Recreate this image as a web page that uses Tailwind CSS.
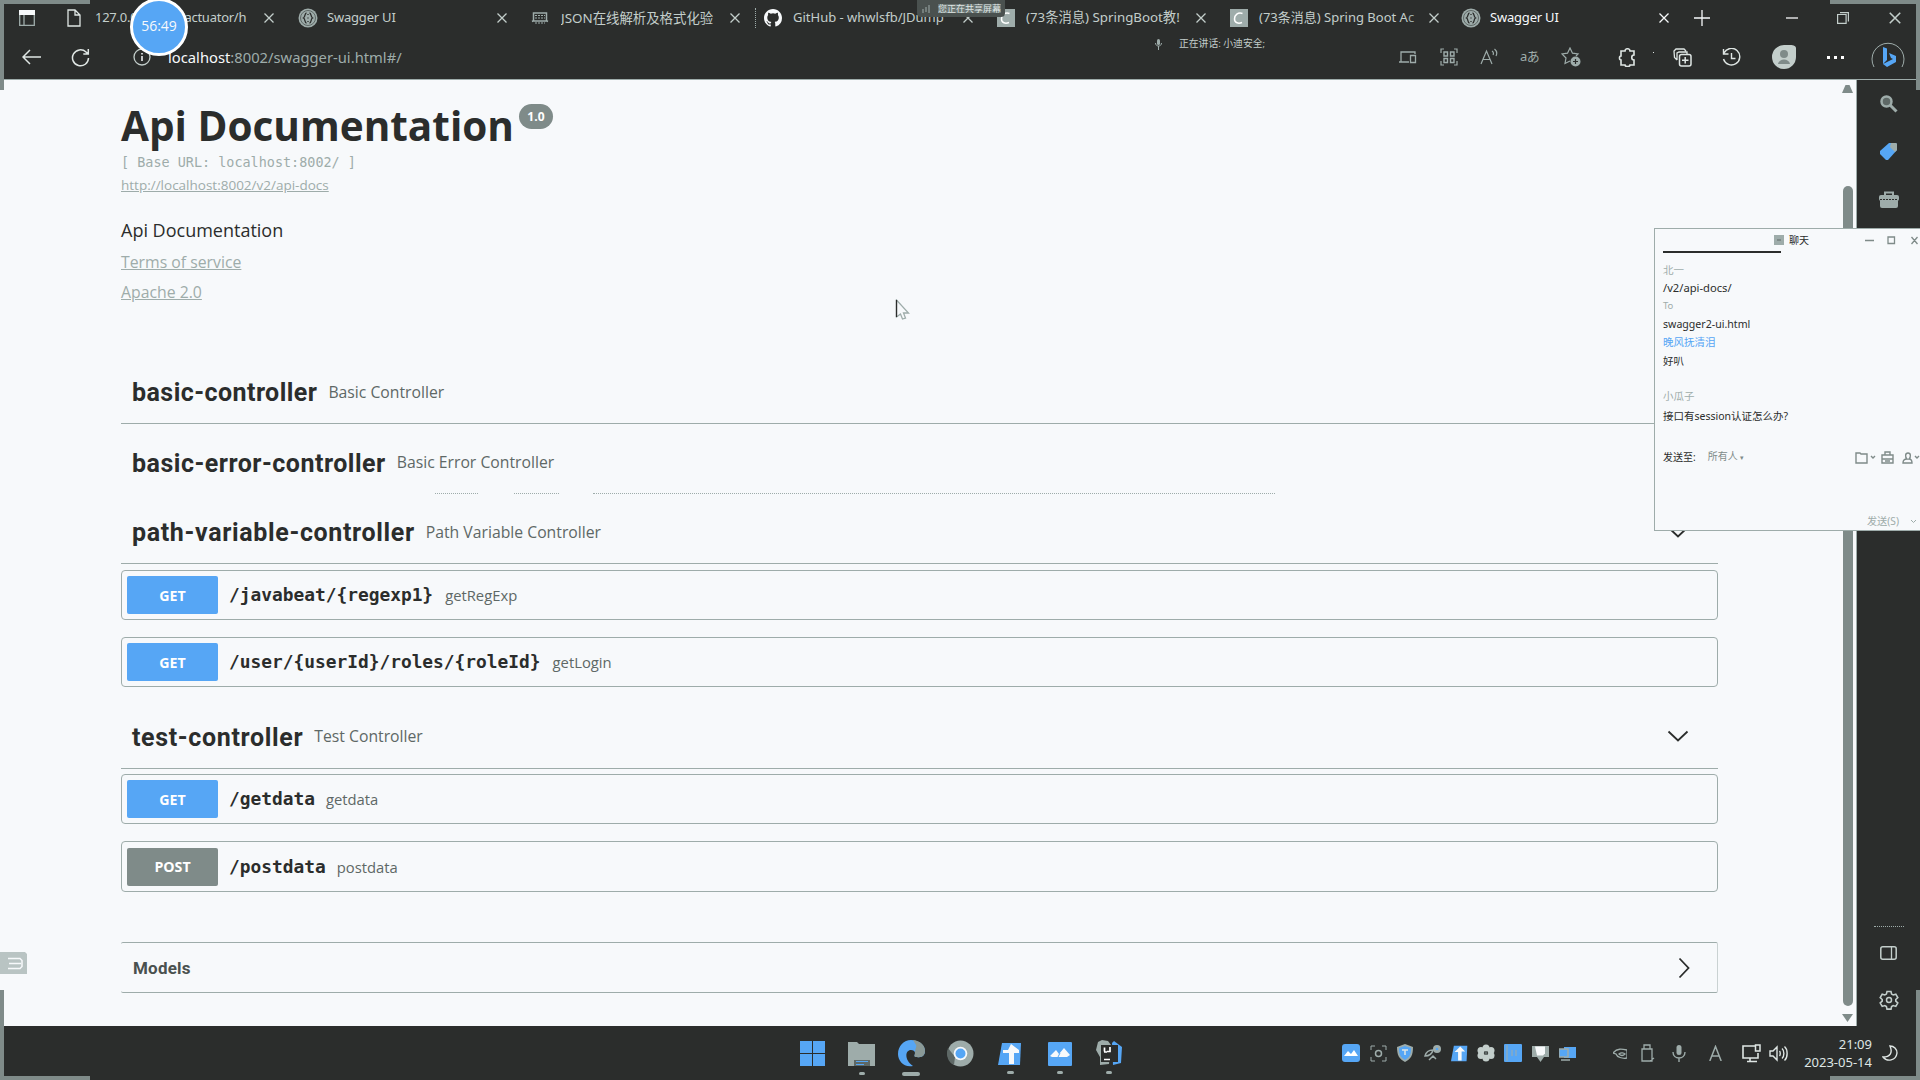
<!DOCTYPE html>
<html lang="zh">
<head>
<meta charset="utf-8">
<title>Swagger UI</title>
<script src="https://cdn.jsdelivr.net/npm/@tailwindcss/browser@4"></script>
</head>
<body class="w-[1920px] h-[1080px] overflow-hidden bg-[#2b2d2c] text-[#2b2d2c] font-['Open_Sans','Noto_Sans_CJK_SC',sans-serif]">
<svg class="hidden">
  <symbol id="x" viewBox="0 0 12 12"><path d="M1.500 1.500l9 9M10.500 1.500l-9 9" fill="none" stroke="currentColor" stroke-width="1.300"/></symbol>
  <symbol id="swag" viewBox="0 0 20 20"><circle cx="10" cy="10" r="9.500" fill="#9eacaa"/><circle cx="10" cy="10" r="7.500" fill="none" stroke="#5e6866"/><path d="M8.500 5c-2 0-1 4-3 5 2 1 1 5 3 5M11.500 5c2 0 1 4 3 5-2 1-1 5-3 5M10 6v1M10 9.500v1M10 13v1" fill="none" stroke="#2b2d2c" stroke-width="1.300"/></symbol>
  <symbol id="csdn" viewBox="0 0 18 18"><path d="M0 0h18v18H0z" fill="#9eacaa"/><path d="M12.500 4.500C8 3 4.500 6 4.500 10c0 4 4 5 7.500 3.500" fill="none" stroke="#fff" stroke-width="1.500"/></symbol>
  <symbol id="down" viewBox="0 0 22 22"><path d="M1.500 6.500l9.500 9 9.500-9" fill="none" stroke="#2b2d2c" stroke-width="1.800"/></symbol>
  <symbol id="gear" viewBox="0 0 20 20"><path d="M8 1.500h4l.6 2.600 1.600.9 2.600-.8 2 3.400-2 1.900v1.600l2 1.900-2 3.400-2.600-.8-1.600.9-.6 2.600H8l-.6-2.600-1.600-.9-2.600.8-2-3.400 2-1.900V9.500l-2-1.900 2-3.400 2.600.8 1.600-.9z" fill="none" stroke="currentColor" stroke-width="1.600"/><circle cx="10" cy="10" r="2.500" fill="none" stroke="currentColor" stroke-width="1.500"/></symbol>
</svg>

<div class="relative flex h-full w-full flex-col">
  <!-- browser chrome -->
  <header class="flex h-[80px] shrink-0 flex-col border-b border-[#9eacaa] text-[#c3cecb]">
    <div class="flex h-9 items-center text-[13px] font-['Noto_Sans','Noto_Sans_CJK_SC',sans-serif]">
      <div class="flex w-[57px] shrink-0 justify-center pr-1"><svg class="size-4" viewBox="0 0 16 16"><path d="M.7.7h14.600v14.600H.7zM5 4v11" fill="none" stroke="#9eacaa" stroke-width="1.300"/><path d="M0 0h16v5H0z" fill="#f7f9fb"/></svg></div>
      <div class="flex w-[233px] shrink-0 items-center pl-2">
        <svg class="mr-3 size-[18px] shrink-0" viewBox="0 0 18 18"><path d="M3 1h7l5 5v11H3zM10 1v5h5" fill="none" stroke="#dfe6e4" stroke-width="1.300"/></svg>
        <span class="w-[156px] overflow-hidden tracking-[-0.25px] whitespace-nowrap">127.0.0.1:8002/actuator/h</span><svg class="ml-3 size-3 shrink-0"><use href="#x"/></svg>
      </div>
      <div class="flex w-[233px] shrink-0 items-center pl-2">
        <svg class="mr-[9px] size-5 shrink-0"><use href="#swag"/></svg>
        <span class="w-[157px] overflow-hidden tracking-[-0.2px] whitespace-nowrap">Swagger UI</span><svg class="ml-3 size-3 shrink-0"><use href="#x"/></svg>
      </div>
      <div class="flex w-[233px] shrink-0 items-center pl-2">
        <svg class="mr-3 size-[18px] shrink-0" viewBox="0 0 18 18"><path d="M2.500 4h13v8h-13zM1 12.500l2-1M17 12.500l-2-1" fill="none" stroke="#9eacaa" stroke-width="1.500"/><path d="M4 6.500h10M4 9h10M4 14h10" stroke="#9eacaa" stroke-dasharray="2 1"/></svg>
        <span class="w-[156px] overflow-hidden text-[13.400px] whitespace-nowrap">JSON在线解析及格式化验</span><svg class="ml-3 size-3 shrink-0"><use href="#x"/></svg><span class="ml-auto h-5 border-l border-dotted border-[#9eacaa]"></span>
      </div>
      <div class="flex w-[233px] shrink-0 items-center pl-2">
        <svg class="mr-[11px] size-[18px] shrink-0" viewBox="0 0 16 16"><path fill="#f7f9fb" d="M8 0C3.580 0 0 3.580 0 8c0 3.540 2.290 6.530 5.470 7.590.4.070.55-.17.55-.38v-1.490c-2.010.37-2.530-.49-2.690-.94-.09-.23-.48-.94-.82-1.130-.28-.15-.68-.52-.01-.53.63-.01 1.080.58 1.230.82.72 1.210 1.870.87 2.330.66.07-.52.28-.87.51-1.070-1.780-.2-3.640-.89-3.640-3.950 0-.87.31-1.590.82-2.150-.08-.2-.36-1.020.08-2.120 0 0 .67-.21 2.200.82a7.600 7.600 0 0 1 4 0c1.530-1.040 2.200-.82 2.200-.82.44 1.100.16 1.920.08 2.120.51.56.82 1.270.82 2.150 0 3.070-1.870 3.750-3.650 3.950.29.25.54.73.54 1.480v2.200c0 .21.15.46.55.38A8 8 0 0 0 16 8c0-4.420-3.580-8-8-8z"/></svg>
        <span class="w-[157px] overflow-hidden whitespace-nowrap">GitHub - whwlsfb/JDump</span><svg class="ml-3 size-3 shrink-0"><use href="#x"/></svg>
      </div>
      <div class="flex w-[233px] shrink-0 items-center pl-2">
        <svg class="mr-[11px] size-[18px] shrink-0"><use href="#csdn"/></svg>
        <span class="w-[157px] overflow-hidden text-[13.300px] whitespace-nowrap">(73条消息) SpringBoot教!</span><svg class="ml-3 size-3 shrink-0"><use href="#x"/></svg>
      </div>
      <div class="flex w-[233px] shrink-0 items-center pl-2">
        <svg class="mr-[11px] size-[18px] shrink-0"><use href="#csdn"/></svg>
        <span class="w-[157px] overflow-hidden whitespace-nowrap">(73条消息) Spring Boot A<span class="text-[#9eacaa]">c</span></span><svg class="ml-3 size-3 shrink-0"><use href="#x"/></svg>
      </div>
      <div class="flex w-[230px] shrink-0 items-center text-[#f7f9fb]">
        <svg class="mr-[9px] ml-1.5 size-5 shrink-0"><use href="#swag"/></svg>
        <span class="w-[156px] overflow-hidden tracking-[-0.2px] whitespace-nowrap">Swagger UI</span><svg class="ml-[12px] size-3 shrink-0"><use href="#x"/></svg>
      </div>
      <div class="flex flex-1 items-center">
        <svg class="ml-[9px] size-4" viewBox="0 0 16 16"><path d="M8 0v16M0 8h16" stroke="#f7f9fb" stroke-width="1.300"/></svg>
        <svg class="ml-[76px] h-4 w-3" viewBox="0 0 12 16"><path d="M0 8h12" stroke="#f7f9fb" stroke-width="1.300"/></svg>
        <svg class="ml-[39px] size-3" viewBox="0 0 12 12"><path d="M.6 2.500h8.500v8.900H.6zM3 .6h8.400V9.500" fill="none" stroke="currentColor" stroke-width="1.200"/></svg>
        <svg class="ml-[39px] size-[14px]"><use href="#x"/></svg>
      </div>
    </div>
    <div class="flex h-[42px] items-center">
      <div class="flex w-[60px] justify-center pl-0.5"><svg class="h-4 w-[19px]" viewBox="0 0 19 16"><path d="M19 8H1.500M8 1L1 8l7 7" fill="none" stroke="#dfe6e4" stroke-width="1.500"/></svg></div>
      <div class="flex w-[40px] justify-center"><svg class="size-[19px]" viewBox="0 0 19 19"><path d="M17.500 10A8 8 0 1 1 15 4l2 2M17.300 1v5h-5" fill="none" stroke="#dfe6e4" stroke-width="1.500"/></svg></div>
      <div class="ml-[22px] flex w-[40px] justify-center"><svg class="size-[18px]" viewBox="0 0 18 18"><circle cx="9" cy="9" r="8" fill="none" stroke="#c3cecb" stroke-width="1.300"/><path d="M9 8v5M9 5v1.500" stroke="#f7f9fb" stroke-width="1.500"/></svg></div>
      <div class="ml-[6px] text-[14.750px] whitespace-nowrap text-[#9eacaa] font-['Noto_Sans',sans-serif]"><span class="text-[#f7f9fb]">localhost</span>:8002/swagger-ui.html#/</div>
      <div class="ml-auto flex items-center text-[#9eacaa]">
        <div class="flex w-[41px] justify-center"><svg class="h-[15px] w-[18px]" viewBox="0 0 18 15"><path d="M10 12H0M2 12V2h14v2M11.500 5.500h5v7h-5z" fill="none" stroke="currentColor" stroke-width="1.300"/></svg></div>
        <div class="flex w-[41px] justify-center"><svg class="size-[18px]" viewBox="0 0 18 18"><path d="M1 5V1h3M14 1h3v4M17 13v4h-3M4 17H1v-4" fill="none" stroke="currentColor" stroke-width="1.200"/><path d="M4 4h3.500v4H4zM10.500 4H14v4h-3.500zM4 10.500h3.500v4H4zM10.500 10.500H14v4h-3.500z" fill="none" stroke="currentColor" stroke-width="1.400"/></svg></div>
        <div class="flex w-[40px] justify-center"><svg class="size-[18px]" viewBox="0 0 18 18"><path d="M1 16L6.500 3 12 16M3 11.500h7M12 3c1.500 1 1.500 3 1 4M14.500 1c2.500 2 2.500 5 1.500 7" fill="none" stroke="currentColor" stroke-width="1.200"/></svg></div>
        <div class="w-[41px] text-center text-[13px] tracking-tighter font-['Noto_Sans','Noto_Sans_CJK_SC',sans-serif]">aあ</div>
        <div class="flex w-[41px] justify-center"><svg class="size-[20px]" viewBox="0 0 20 20"><path d="M9 14l-5 2.500 1-5.500L1 7l5.500-.8L9 1l2.500 5.200L17 7l-2 2" fill="none" stroke="currentColor" stroke-width="1.200"/><circle cx="14.500" cy="14.500" r="5" fill="currentColor"/><path d="M14.500 12v5M12 14.500h5" stroke="#2b2d2c" stroke-width="1.200"/></svg></div>
        <div class="relative flex w-[72px] justify-center text-[#dfe6e4]"><svg class="size-[19px]" viewBox="0 0 19 19"><path d="M3 3h4c0-3 5-3 5 0h4v4c-3 0-3 5 0 5v5h-4c0 2-5 2-5 0H3v-5c-2 0-2-4 0-4z" fill="none" stroke="currentColor" stroke-width="1.600"/></svg><span class="absolute top-[4px] right-[9px] size-px bg-[#dfe6e4]"></span></div>
        <div class="flex w-[38px] justify-center text-[#dfe6e4]"><svg class="size-[19px]" viewBox="0 0 19 19"><path d="M4 12L1.500 9.500 1 3l2-2h8l2 2M4 12V5l2-1h8v2" fill="none" stroke="currentColor" stroke-width="1.300"/><rect x="6.500" y="6.500" width="11.500" height="11.500" rx="2" fill="none" stroke="currentColor" stroke-width="1.500"/><path d="M12.200 9v6.500M9 12.200h6.500" stroke="currentColor" stroke-width="1.500"/></svg></div>
        <div class="flex w-[60px] justify-center text-[#dfe6e4]"><svg class="size-[19px]" viewBox="0 0 19 19"><path d="M2 5a8.300 8.300 0 1 1-.5 6M1.500 1v5h5M9.500 5v5.500h4" fill="none" stroke="currentColor" stroke-width="1.400"/></svg></div>
        <div class="flex w-[46px] justify-center"><svg class="size-[26px]" viewBox="0 0 26 26"><path d="M13 1c4 0 12-1 12 3v9a12 12 0 1 1-12-12z" fill="#c3cecb"/><circle cx="13" cy="10" r="4" fill="#7f8b89"/><path d="M7 20c1-6 11-6 12 0z" fill="#7f8b89"/></svg></div>
        <div class="flex w-[56px] justify-center gap-1"><i class="size-[3px] bg-white"></i><i class="size-[3px] bg-white"></i><i class="size-[3px] bg-white"></i></div>
        <div class="mr-[7px] flex w-[50px] justify-center"><svg class="size-[34px]" viewBox="0 0 34 34"><path d="M3 27a16 16 0 1 1 28 0" fill="none" stroke="#9eacaa"/><path d="M12 7l4 1.500V20l-4 4zM12 24l4 3 9-5v-6l-7-3 2 5 2 1-10 5z" fill="#56a6f5"/></svg></div>
      </div>
    </div>
  </header>

  <div class="flex h-[946px] shrink-0">
    <!-- page -->
    <main class="flex w-[1857px] justify-between border-r border-[#9eacaa] bg-[#f7f9fb]">
      <div class="ml-[121px] w-[1597px] pt-[19px]">
        <div class="flex h-[54px] items-start"><h1 class="text-[40.500px] leading-[54px] font-bold whitespace-nowrap">Api Documentation</h1><span class="mt-[5px] ml-[5px] flex h-[25px] w-[34px] items-center justify-center rounded-full bg-[#7f8b89] text-[12px] font-bold text-white">1.0</span></div>
        <pre class="h-[19px] text-[13.460px] leading-[19px] text-[#9eacaa] font-['DejaVu_Sans_Mono',monospace]">[ Base URL: localhost:8002/ ]</pre>
        <div class="mt-px h-6 text-[13.500px] leading-6 text-[#9eacaa]"><a class="underline">http://localhost:8002/v2/api-docs</a></div>
        <p class="mt-[19px] h-7 text-[18px] leading-7">Api Documentation</p>
        <div class="mt-1 h-7 text-[15.800px] leading-7 text-[#9eacaa]"><a class="underline">Terms of service</a></div>
        <div class="mt-[2px] h-7 text-[15.800px] leading-7 text-[#9eacaa]"><a class="underline">Apache 2.0</a></div>

        <section class="mt-[55px] flex h-[63px] items-center gap-[11px] border-b border-[#9eacaa] pl-[11px]"><h2 class="pt-[2px] text-[25px] font-bold tracking-[0.45px] font-['Roboto',sans-serif]">basic-controller</h2><small class="pt-px text-[15.750px] text-[#5e6866]">Basic Controller</small></section>
        <section class="relative mt-[7px] flex h-[63px] items-center gap-[11px] pl-[11px]"><h2 class="pt-[2px] text-[25px] font-bold tracking-[0.5px] font-['Roboto',sans-serif]">basic-error-controller</h2><small class="text-[15.750px] text-[#5e6866]">Basic Error Controller</small>
          <div class="absolute bottom-0 left-[314px] flex w-[840px]"><i class="mr-[36px] w-[43px] border-b border-dotted border-[#9eacaa]"></i><i class="mr-[34px] w-[45px] border-b border-dotted border-[#9eacaa]"></i><i class="flex-1 border-b border-dotted border-[#9eacaa]"></i></div></section>
        <section class="mt-[7px] flex h-[63px] items-center gap-[11px] border-b border-[#9eacaa] pr-[29px] pl-[11px]"><h2 class="pt-[2px] text-[25px] font-bold tracking-[0.65px] font-['Roboto',sans-serif]">path-variable-controller</h2><small class="pt-px text-[15.750px] text-[#5e6866]">Path Variable Controller</small><svg class="ml-auto size-[22px]"><use href="#down"/></svg></section>

        <div class="mt-[6px] flex h-[50px] items-center rounded border border-[#9eacaa] pl-[5px]"><b class="flex h-[38px] w-[91px] items-center justify-center rounded-xs bg-[#56a6f5] pt-px text-[14.200px] text-white">GET</b><code class="ml-[11px] pt-px text-[17.850px] font-bold font-['DejaVu_Sans_Mono',monospace]">/javabeat/{regexp1}</code><span class="ml-3 text-[14.800px] text-[#5e6866]">getRegExp</span></div>
        <div class="mt-[17px] flex h-[50px] items-center rounded border border-[#9eacaa] pl-[5px]"><b class="flex h-[38px] w-[91px] items-center justify-center rounded-xs bg-[#56a6f5] pt-px text-[14.200px] text-white">GET</b><code class="ml-[11px] pt-px text-[17.850px] font-bold font-['DejaVu_Sans_Mono',monospace]">/user/{userId}/roles/{roleId}</code><span class="ml-3 text-[14.800px] text-[#5e6866]">getLogin</span></div>

        <section class="mt-[19px] flex h-[63px] items-center gap-[11px] border-b border-[#9eacaa] pr-[29px] pl-[11px]"><h2 class="pt-[2px] text-[25px] font-bold tracking-[0.65px] font-['Roboto',sans-serif]">test-controller</h2><small class="text-[15.750px] text-[#5e6866]">Test Controller</small><svg class="mb-[3px] ml-auto size-[22px]"><use href="#down"/></svg></section>
        <div class="mt-[5px] flex h-[50px] items-center rounded border border-[#9eacaa] pl-[5px]"><b class="flex h-[38px] w-[91px] items-center justify-center rounded-xs bg-[#56a6f5] pt-px text-[14.200px] text-white">GET</b><code class="ml-[11px] pt-px text-[17.850px] font-bold font-['DejaVu_Sans_Mono',monospace]">/getdata</code><span class="ml-[11px] text-[14.800px] text-[#5e6866]">getdata</span></div>
        <div class="mt-[17px] flex h-[51px] items-center rounded border border-[#9eacaa] pl-[5px]"><b class="flex h-[38px] w-[91px] items-center justify-center rounded-xs bg-[#7f8b89] pt-px text-[14.200px] text-white">POST</b><code class="ml-[11px] pt-px text-[17.850px] font-bold font-['DejaVu_Sans_Mono',monospace]">/postdata</code><span class="ml-[11px] pt-px text-[14.800px] text-[#5e6866]">postdata</span></div>

        <div class="mt-[50px] flex h-[51px] items-center justify-between rounded-xs border-y border-r border-y-[#9eacaa] border-r-[#cad2d2] pr-[22px] pl-3"><h3 class="pt-[2px] text-[17px] font-bold tracking-[0.2px] text-[#4a514f] font-['Roboto',sans-serif]">Models</h3><svg class="size-[22px] -rotate-90"><use href="#down"/></svg></div>
      </div>
      <!-- scrollbar -->
      <div class="mr-[3px] flex w-[11px] flex-col items-center">
        <svg class="mt-[5px] h-[8px] w-[11px]" viewBox="0 0 11 8"><path d="M3.500 0h4L11 8H0z" fill="#7f8b89"/></svg>
        <div class="mt-[93px] h-[820px] w-[10px] rounded-full bg-[#7f8b89]"></div>
        <svg class="mt-[8px] h-[8px] w-[11px]" viewBox="0 0 11 8"><path d="M0 0h11L5.500 8z" fill="#7f8b89"/></svg>
      </div>
    </main>

    <!-- Edge sidebar -->
    <aside class="flex flex-1 flex-col items-center text-[#c3cecb]">
      <svg class="mt-[14px] size-[19px]" viewBox="0 0 19 19"><circle cx="7.500" cy="7.500" r="5" fill="#5e6866" stroke="#9eacaa" stroke-width="2.500"/><path d="M11 11l6.500 6.500" stroke="#9eacaa" stroke-width="3"/></svg>
      <svg class="mt-[29px] size-[19px]" viewBox="0 0 19 19"><path d="M10 1h7l1 1v6l-9 10H7l-6-6V9z" fill="#56a6f5"/><path d="M12 1h5l1 1v6l-2 2-5-5z" fill="#9eacaa"/></svg>
      <svg class="mt-[30px] h-[17px] w-5" viewBox="0 0 20 17"><path d="M6 5V1.500h8V5" fill="none" stroke="#9eacaa" stroke-width="2"/><rect y="4" width="20" height="6" rx="2" fill="#9eacaa"/><rect x="1" y="8" width="18" height="9" rx="2" fill="#9eacaa"/><path d="M1 8.500h18" stroke="#2b2d2c" stroke-dasharray="2 1"/></svg>
      <div class="mt-auto mb-[19px] w-[30px] border-t border-dotted border-[#9eacaa]"></div>
      <svg class="h-[14px] w-[17px]" viewBox="0 0 17 14"><rect x=".8" y=".8" width="15.400" height="12.400" rx="2" fill="none" stroke="currentColor" stroke-width="1.500"/><path d="M11.500 1v12" stroke="currentColor" stroke-width="1.300"/></svg>
      <svg class="mt-[30px] mb-[16px] size-5"><use href="#gear"/></svg>
    </aside>
  </div>

  <!-- taskbar -->
  <footer class="relative flex flex-1 items-center text-[#c3cecb]">
    <div class="ml-[787.500px] flex h-full">
      <div class="flex w-[49.500px] flex-col items-center pt-[14px]"><svg class="size-[27px]" viewBox="0 0 27 27"><path d="M1 1h12v12H1zM14 1h12v12H14zM1 14h12v12H1zM14 14h12v12H14z" fill="#56a6f5"/></svg></div>
      <div class="flex w-[49.500px] flex-col items-center gap-[5px] pt-[15px]"><svg class="h-[26px] w-[27px]" viewBox="0 0 27 26"><path d="M0 1h9l2 2h16v22H0z" fill="#9eacaa"/><path d="M6 25v-6h16v6" fill="#5e6866"/><path d="M8 20.500h12M8 23.500h8" stroke="#56a6f5" stroke-width="1.200"/></svg><i class="h-[3px] w-[6px] rounded bg-[#9eacaa]"></i></div>
      <div class="flex w-[49.500px] flex-col items-center gap-[5px] pt-[14px]"><svg class="size-[27px]" viewBox="0 0 27 27"><path d="M13 0c8 0 14 5 14 11 0 4-3 7-8 6-4 0-2-2-2-4s-2-3-4-3c-6 0-7 10 2 16C6 28 0 21 0 14 0 6 6 0 13 0z" fill="#56a6f5"/><path d="M15 0c8 1 12 6 12 11 0 4-3 7-8 6-4 0-2-2-2-4 0-5 2-6 1-8z" fill="#8a9997"/></svg><i class="h-[4px] w-[18px] rounded bg-[#9eacaa]"></i></div>
      <div class="flex w-[49.500px] flex-col items-center pt-[14px]"><svg class="size-[27px]" viewBox="0 0 27 27"><circle cx="13.500" cy="13.500" r="13" fill="#9eacaa"/><path d="M1 8l7 9-1 8C0 22-1 14 1 8z" fill="#5e6866"/><circle cx="13.500" cy="13.500" r="6.800" fill="#f7f9fb"/><circle cx="13.500" cy="13.500" r="5" fill="#56a6f5"/></svg></div>
      <div class="flex w-[49.500px] flex-col items-center gap-[5px] pt-[16px]"><svg class="h-[24px] w-[24px]" viewBox="0 0 24 24"><path d="M4 1h19l-1 22H0z" fill="#56a6f5"/><path d="M13 2l8 6v3h-5v11h-5V11H5V8h5z" fill="#f7f9fb"/></svg><i class="h-[3px] w-[7px] rounded bg-[#9eacaa]"></i></div>
      <div class="flex w-[49.500px] flex-col items-center gap-[5px] pt-[16px]"><svg class="size-6" viewBox="0 0 24 24"><rect width="24" height="24" rx="1" fill="#56a6f5"/><path d="M2 14l6-6 3 4 5-6 6 7-3 2H4z" fill="#f7f9fb"/><path d="M10 15l2-4" stroke="#56a6f5"/></svg><i class="h-[3px] w-[6px] rounded bg-[#9eacaa]"></i></div>
      <div class="flex w-[49.500px] flex-col items-center gap-[5px] pt-[14px]"><svg class="size-[26px]" viewBox="0 0 26 26"><path d="M2 2l4-2 6 1 3 4-2 19-9 1v-8L0 10z" fill="#9eacaa"/><path d="M16 3l2-2 8 6-1 16-8 2z" fill="#56a6f5"/><path d="M5 5h17v17H5z" fill="#2b2d2c"/><path d="M8.500 7.500v4M8 12h3M14 7v4.500h-3M8 19.500h6" fill="none" stroke="#fff" stroke-width="1.700"/></svg><i class="h-[3px] w-[6px] rounded bg-[#9eacaa]"></i></div>
    </div>
    <div class="ml-[203.500px] flex items-center">
      <div class="flex w-[27px] justify-center"><svg class="size-[18px]" viewBox="0 0 18 18"><rect width="18" height="18" rx="3" fill="#56a6f5"/><path d="M2 12l4-5 3 3 3-4 4 6z" fill="#fff"/></svg></div>
      <div class="flex w-[27px] justify-center"><svg class="size-[17px]" viewBox="0 0 17 17"><path d="M1 5V1h4M12 1h4v4M16 12v4h-4M5 16H1v-4" fill="none" stroke="#9eacaa"/><circle cx="8.500" cy="8.500" r="3" fill="none" stroke="#9eacaa" stroke-width="1.500"/></svg></div>
      <div class="flex w-[27px] justify-center"><svg class="size-[18px]" viewBox="0 0 18 18"><path d="M9 0l8 3c0 8-2 12-8 15C3 15 1 11 1 3z" fill="#9eacaa"/><path d="M9 2l6 2c0 6-1 9-6 12C4 13 3 10 3 4z" fill="#56a6f5"/><path d="M6 6h6M9 6v5" stroke="#dfe6e4" stroke-width="1.500"/></svg></div>
      <div class="flex w-[27px] justify-center"><svg class="size-[17px]" viewBox="0 0 17 17"><path d="M1 11c1-4 4-6 8-6-1 4-4 6-8 6zM5 15l4-4 3 3" fill="none" stroke="#9eacaa" stroke-width="1.500"/><circle cx="13" cy="4" r="4" fill="#9eacaa"/><circle cx="13" cy="4" r="1.300" fill="#56a6f5"/></svg></div>
      <div class="flex w-[27px] justify-center"><svg class="size-[17px]" viewBox="0 0 24 24"><path d="M4 1h19l-1 22H0z" fill="#56a6f5"/><path d="M13 2l7 7h-5v13h-5V10H5z" fill="#f7f9fb"/></svg></div>
      <div class="flex w-[27px] justify-center"><svg class="size-[18px]" viewBox="0 0 18 18"><g fill="#c3cecb"><circle cx="9" cy="4" r="3.500"/><circle cx="9" cy="14" r="3.500"/><circle cx="4" cy="6.500" r="3.500"/><circle cx="14" cy="6.500" r="3.500"/><circle cx="4" cy="11.500" r="3.500"/><circle cx="14" cy="11.500" r="3.500"/></g><circle cx="9" cy="9" r="1.500" fill="#5e6866"/></svg></div>
      <div class="flex w-[27px] justify-center"><svg class="size-[18px]" viewBox="0 0 18 18"><rect width="18" height="18" rx="1" fill="#56a6f5"/><path d="M3 1v16M8 6v6M12 6v6" stroke="#9eacaa"/></svg></div>
      <div class="flex w-[27px] justify-center"><svg class="size-[17px]" viewBox="0 0 17 17"><path d="M0 1h17v11H0z" fill="#9eacaa"/><path d="M3 1.500h10v7l-2 2H5z" fill="#f7f9fb"/><path d="M5 12h7l-3.500 5z" fill="#9eacaa"/></svg></div>
      <div class="flex w-[27px] justify-center"><svg class="size-[17px]" viewBox="0 0 17 17"><path d="M5 2h12v11H5z" fill="#56a6f5"/><path d="M0 4h9v8H0zM2 15h9" fill="#56a6f5" stroke="#9eacaa" stroke-width="1.500"/></svg></div>
      <svg class="ml-[32px] h-[11px] w-[14px]" viewBox="0 0 14 11"><path d="M0 5c4-5 9-4 14-3v8C9 11 4 9 3 6zM6 6c2-2 5-1 6 0-2 2-4 2-6 0z" fill="none" stroke="#9eacaa" stroke-width="1.300"/></svg>
      <svg class="ml-[14px] h-[19px] w-[14px]" viewBox="0 0 14 19"><path d="M3 1h6v4H3zM1 5h10v12H1zM9 17l4-3" fill="none" stroke="#9eacaa" stroke-width="1.300"/></svg>
      <svg class="ml-[17px] h-[19px] w-[14px]" viewBox="0 0 14 19"><rect x="4.500" y="1" width="5" height="10" rx="2.500" fill="#9eacaa"/><path d="M1 8c0 8 12 8 12 0M7 14v4" fill="none" stroke="#9eacaa" stroke-width="1.400"/></svg>
      <svg class="ml-[23px] h-[16px] w-[13px]" viewBox="0 0 13 16"><path d="M.8 16L6.500 1.500 12.200 16M3 11h7" fill="none" stroke="#9eacaa" stroke-width="1.500"/></svg>
      <svg class="ml-[20px] size-[19px]" viewBox="0 0 19 19"><path d="M13 2H1v12h15V9M5 17.500h10M8 14v3" fill="none" stroke="#dfe6e4" stroke-width="1.600"/><rect x="13.500" y="1" width="4.500" height="6" fill="none" stroke="#dfe6e4" stroke-width="1.500"/></svg>
      <svg class="ml-[8px] size-[19px]" viewBox="0 0 19 19"><path d="M1 7v5h3l4 4V3L4 7zM10.500 7c1 1 1 4 0 5M13 4.500c2.500 2 2.500 8 0 10M15.500 2.500c3.500 3 3.500 11 0 14" fill="none" stroke="#dfe6e4" stroke-width="1.400"/></svg>
    </div>
    <div class="absolute top-[9px] right-[48px] text-right text-[13px] leading-[18px] text-[#dfe6e4] font-['Noto_Sans',sans-serif]">21:09<br>2023-05-14</div>
    <svg class="absolute top-[19px] right-[22px] size-4" viewBox="0 0 16 16"><path d="M8 1c3 7 0 11-7 11 4 5 13 4 14-4 0-4-3-7-7-7z" fill="none" stroke="#dfe6e4" stroke-width="1.400"/></svg>
  </footer>

  <!-- chat window -->
  <div class="absolute top-[228px] left-[1654px] flex h-[303px] w-[266px] flex-col border border-r-0 border-[#9eacaa] bg-[#f7f9fb] pl-2 text-[11px] leading-[18px] font-['Noto_Sans','Noto_Sans_CJK_SC',sans-serif]">
    <div class="flex h-6 items-center pt-px text-[10px]"><svg class="ml-[111px] size-[10px] shrink-0" viewBox="0 0 10 10"><path d="M0 0h10v10H0z" fill="#9eacaa"/><path d="M3 5h4" stroke="#5e6866"/></svg><span class="ml-[5px] shrink-0 whitespace-nowrap">聊天</span><svg class="ml-[55px] h-[9px] w-[56px] shrink-0" viewBox="0 0 56 9"><path d="M1 4.500h9M24 1h6.500v6.500H24zM47.500 1l6 7M53.500 1l-6 7" fill="none" stroke="#7f8b89" stroke-width="1.300"/></svg></div>
    <div class="mt-px h-[2px] w-[118px] shrink-0 bg-[#2b2d2c]"></div>
    <p class="mt-2 text-[10.500px] text-[#9eacaa]">北一</p>
    <p class="text-[11.200px]">/v2/api-docs/</p>
    <p class="text-[9.500px] text-[#9eacaa]">To</p>
    <p class="text-[10.600px]">swagger2-ui.html</p>
    <p class="text-[10.500px] text-[#56a6f5]">晚风抚清泪</p>
    <p class="pt-px text-[10.500px]">好叭</p>
    <p class="mt-[17px] text-[10.500px] text-[#9eacaa]">小瓜子</p>
    <p class="mt-[2px] text-[10.500px]">接口有session认证怎么办?</p>
    <div class="mt-[22px] flex items-center text-[10px]"><span>发送至:</span><span class="ml-[12px] text-[#7f8b89]">所有人 <span class="text-[7px]">▾</span></span>
      <svg class="mr-0 ml-auto h-[13px] w-[65px]" viewBox="0 0 65 13"><path d="M1 2h4l1 1h6v9H1zM16 5l2 2 2-2M27 4h11v8H27zM30 4V1h5v3M27 8h11M30 10h5M48 12h9c0-3-1-4-3-4 2-2 2-6-1-6s-3 4-1 6c-3 0-4 1-4 4zM60 5l2 2 2-2" fill="none" stroke="#7f8b89" stroke-width="1.400"/></svg></div>
    <div class="mt-[45px] flex items-center justify-end pr-1 text-[10.200px] text-[#9eacaa]">发送(S)<svg class="ml-3 size-[5px]" viewBox="0 0 5 5"><path d="M0 1l2.500 2.500L5 1" fill="none" stroke="#9eacaa"/></svg></div>
  </div>

  <!-- screen-share overlays -->
  <div class="absolute top-0 left-[917px] flex h-[17px] w-[88px] items-center justify-end rounded-b bg-[#4a514f] pr-1 text-[9px] leading-none text-[#dfe6e4]"><svg class="mr-2 size-2" viewBox="0 0 8 8"><path d="M1 4v4M4 2v5M7 0v8" stroke="#9eacaa"/></svg><span class="bg-[#6c7674]">您正在共享屏幕</span></div>
  <div class="absolute top-[36px] left-[1155px] flex h-4 items-center gap-[17px] text-[9.800px] leading-none text-[#c3cecb]"><svg class="h-[11px] w-[7px]" viewBox="0 0 7 11"><rect x="2" width="3" height="6" rx="1.500" fill="#9eacaa"/><path d="M.5 4c0 4 6 4 6 0M3.500 7v4" fill="none" stroke="#9eacaa"/></svg><span class="whitespace-nowrap">正在讲话: 小迪安全;</span></div>
  <div class="absolute top-[-2px] left-[130px] flex size-[58px] items-center justify-center rounded-full border-[3px] border-white bg-[#56a6f5] pb-[3px] text-[14px] text-[#f7f9fb]">56:49</div>
  <svg class="absolute top-[952px] left-0 h-[22px] w-[27px]" viewBox="0 0 27 22"><path d="M0 0h25l2 2v20H0z" fill="#b9c4c3"/><path d="M8 6.500h12l2 2v6l-2 2H8M9 11.500h12" fill="none" stroke="#f7f9fb" stroke-width="1.500"/></svg>
  <div class="absolute top-0 left-0 h-[90px] w-[90px] border-t-4 border-l-4 border-[#7f8b89]"></div>
  <div class="absolute top-0 right-0 h-[90px] w-[90px] border-t-4 border-r-4 border-[#7f8b89]"></div>
  <div class="absolute bottom-0 left-0 h-[90px] w-[90px] border-b-4 border-l-4 border-[#7f8b89]"></div>
  <div class="absolute right-0 bottom-0 h-[90px] w-[90px] border-r-4 border-b-4 border-[#7f8b89]"></div>
  <svg class="absolute top-[299px] left-[895px] h-[22px] w-[16px]" viewBox="0 0 16 22"><path d="M1.500 1v17l4-3 2 5 3-1-2-5h5z" fill="#f7f9fb" stroke="#9eacaa" stroke-width="1.300"/><path d="M1.500 1v17" stroke="#2b2d2c" stroke-width="1.300"/></svg>
</div>
</body>
</html>
